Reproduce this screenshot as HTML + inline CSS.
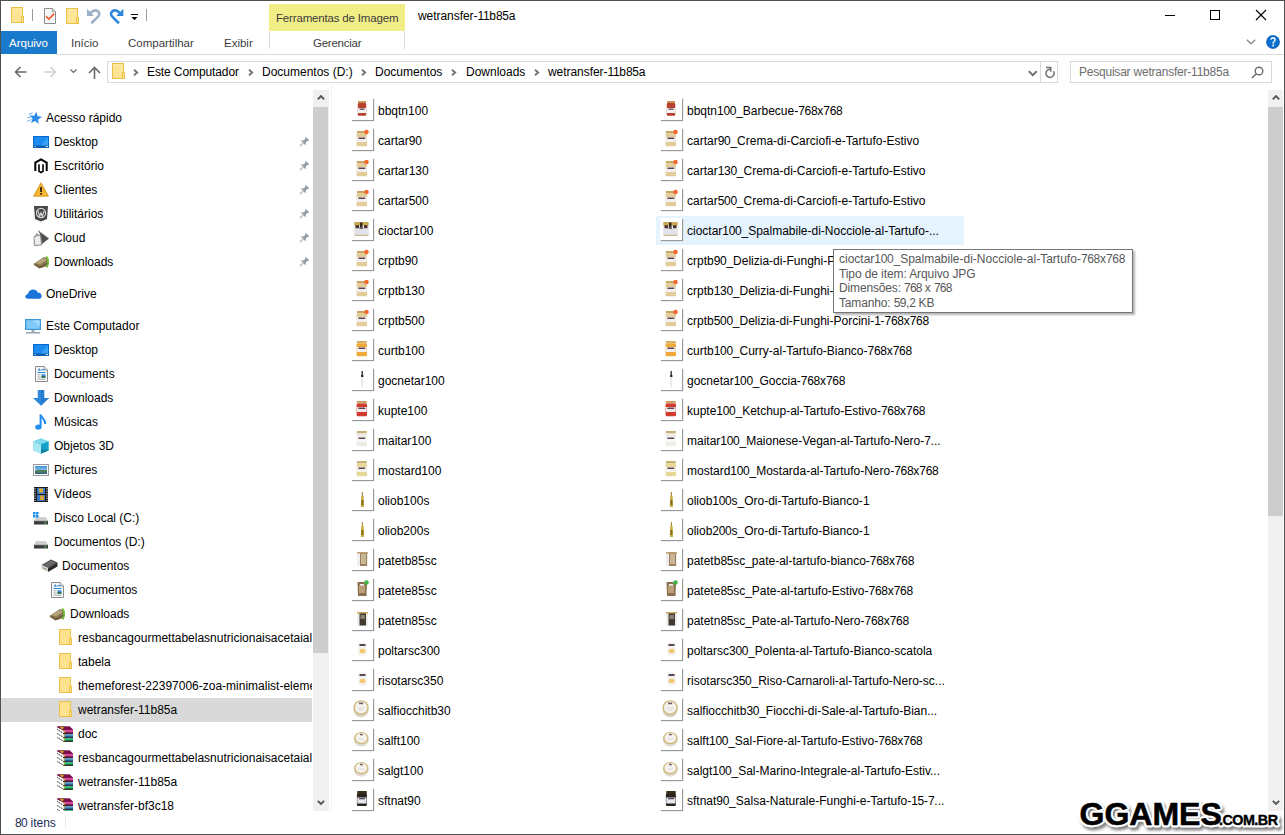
<!DOCTYPE html><html><head><meta charset="utf-8"><style>
*{margin:0;padding:0;box-sizing:border-box}
html,body{width:1285px;height:835px;overflow:hidden;background:#fff}
body{position:relative;font-family:"Liberation Sans",sans-serif;font-size:12px;color:#000}
.t{position:absolute;white-space:nowrap;line-height:16px}
.a{position:absolute}
svg{position:absolute;overflow:visible}
</style></head><body>
<svg style="left:11px;top:7px" width="13" height="16" viewBox="0 0 13 16"><rect x="0.5" y="0.5" width="11" height="15" fill="#FEE595" stroke="#E9C048"/><path d="M2 2L10 2L10 9" stroke="#FFEDB5" stroke-width="1" fill="none"/><rect x="10.5" y="9.5" width="2" height="6" fill="#FEE595" stroke="#E9C048"/></svg><div class="a" style="left:32px;top:9px;width:1px;height:12px;background:#9a9a9a"></div><svg style="left:44px;top:8px" width="13" height="16" viewBox="0 0 13 16"><path d="M0.5 0.5H8.3L11.5 3.7V15.5H0.5Z" fill="#fff" stroke="#8a8a8a"/><path d="M2 2H8V4.5H10V14H2Z" fill="#f2f4f6"/><path d="M8.3 0.5V3.7H11.5" fill="none" stroke="#8a8a8a" stroke-width="0.8"/><path d="M2 8.2L4.8 11L10.3 5.6" fill="none" stroke="#F05A28" stroke-width="1.6"/></svg><svg style="left:66px;top:8px" width="13" height="16" viewBox="0 0 13 16"><rect x="0.5" y="0.5" width="11" height="15" fill="#FEE595" stroke="#E9C048"/><path d="M2 2L10 2L10 9" stroke="#FFEDB5" stroke-width="1" fill="none"/><rect x="10.5" y="9.5" width="2" height="6" fill="#FEE595" stroke="#E9C048"/></svg><svg style="left:87px;top:8px" width="14" height="16" viewBox="0 0 14 16"><path d="M3.5 4.8C5.5 2.8 7 2.2 9 2.4C11.3 2.7 12.6 4.6 12.2 6.8C12 8 11.2 9 4.3 15.2" fill="none" stroke="#9DAFC9" stroke-width="2.6"/><path d="M0 0.8V8H7Z" fill="#9DAFC9"/></svg><svg style="left:110px;top:8px" width="14" height="16" viewBox="0 0 14 16"><g transform="translate(13.3 0) scale(-1 1)"><path d="M3.5 4.8C5.5 2.8 7 2.2 9 2.4C11.3 2.7 12.6 4.6 12.2 6.8C12 8 11.2 9 4.3 15.2" fill="none" stroke="#2B86DC" stroke-width="2.6"/><path d="M0 0.8V8H7Z" fill="#2B86DC"/></g></svg><div class="a" style="left:131px;top:14px;width:7px;height:1px;background:#000"></div><svg style="left:131px;top:17px" width="8" height="5"><path d="M0.5 0H6.5L3.5 3.2Z" fill="#000"/></svg><div class="a" style="left:146px;top:9px;width:1px;height:12px;background:#9a9a9a"></div><div class="a" style="left:269px;top:4px;width:136px;height:27px;background:#F1EE86"></div><div class="t" style="left:276px;top:10px;color:#3c3c3c;font-size:11.5px;letter-spacing:-0.17px">Ferramentas de Imagem</div><div class="a" style="left:269px;top:31px;width:1px;height:18px;background:#dcdcdc"></div><div class="a" style="left:404px;top:31px;width:1px;height:18px;background:#dcdcdc"></div><div class="t" style="left:418px;top:8px;color:#000;font-size:12px;letter-spacing:-0.05px">wetransfer-<span style="letter-spacing:-0.3px">11</span>b<span style="letter-spacing:-0.3px">85</span>a</div><div class="a" style="left:1165px;top:15px;width:10px;height:1px;background:#000"></div><div class="a" style="left:1210px;top:10px;width:10px;height:10px;border:1px solid #000"></div><svg style="left:1256px;top:10px" width="10" height="10" viewBox="0 0 10 10"><path d="M0 0L10 10M10 0L0 10" stroke="#000" stroke-width="1.1"/></svg><div class="a" style="left:1px;top:31px;width:56px;height:23px;background:#1979CA"></div><div class="t" style="left:9px;top:35px;color:#fff;font-size:11.5px;">Arquivo</div><div class="t" style="left:71px;top:35px;color:#3c3c3c;font-size:11.5px;">Início</div><div class="t" style="left:128px;top:35px;color:#3c3c3c;font-size:11.5px;">Compartilhar</div><div class="t" style="left:224px;top:35px;color:#3c3c3c;font-size:11.5px;">Exibir</div><div class="t" style="left:313px;top:35px;color:#3c3c3c;font-size:11.5px;letter-spacing:-0.25px">Gerenciar</div><div class="a" style="left:57px;top:54px;width:1227px;height:1px;background:#DADBDC"></div><svg style="left:1246px;top:39px" width="11" height="7" viewBox="0 0 11 7"><path d="M0.8 0.8L5 4.8L9.2 0.8" fill="none" stroke="#8a8a8a" stroke-width="1.3"/></svg><svg style="left:1266px;top:35px" width="14" height="14" viewBox="0 0 14 14"><circle cx="7" cy="7" r="6.7" fill="#0C6FD0"/><circle cx="7" cy="7" r="6.2" fill="none" stroke="#0a5cb0" stroke-width="0.8"/><path d="M5 4.6C5.2 3.5 6 2.9 7.1 2.9C8.3 2.9 9.1 3.7 9.1 4.7C9.1 6.2 7.4 6.4 7.2 8.2V8.8" fill="none" stroke="#e6f2ff" stroke-width="1.6"/><rect x="6.3" y="9.6" width="1.8" height="1.8" fill="#e6f2ff"/></svg><svg style="left:14px;top:66px" width="13" height="12" viewBox="0 0 13 12"><path d="M12.5 6H1.5M6.5 1L1.5 6L6.5 11" fill="none" stroke="#6a6a6a" stroke-width="1.6"/></svg><svg style="left:44px;top:66px" width="13" height="12" viewBox="0 0 13 12"><path d="M0.5 6H11.5M6.5 1L11.5 6L6.5 11" fill="none" stroke="#d0d0d0" stroke-width="1.6"/></svg><svg style="left:70px;top:69px" width="8" height="5" viewBox="0 0 8 5"><path d="M0.5 0.5L3.5 3.5L6.5 0.5" fill="none" stroke="#6a6a6a" stroke-width="1.2"/></svg><svg style="left:88px;top:66px" width="13" height="13" viewBox="0 0 13 13"><path d="M6.5 13V1.5M1 7L6.5 1.5L12 7" fill="none" stroke="#6a6a6a" stroke-width="1.6"/></svg><div class="a" style="left:107px;top:61px;width:951px;height:22px;border:1px solid #D9D9D9"></div><div class="a" style="left:1040px;top:62px;width:1px;height:20px;background:#D9D9D9"></div><svg style="left:112px;top:63px" width="13" height="16" viewBox="0 0 13 16"><rect x="0.5" y="0.5" width="11" height="15" fill="#FEE595" stroke="#E9C048"/><path d="M2 2L10 2L10 9" stroke="#FFEDB5" stroke-width="1" fill="none"/><rect x="10.5" y="9.5" width="2" height="6" fill="#FEE595" stroke="#E9C048"/></svg><svg style="left:133px;top:69px" width="6" height="8" viewBox="0 0 6 8"><path d="M1 0.8L4.2 3.5L1 6.2" fill="none" stroke="#707070" stroke-width="1.8"/></svg><div class="t" style="left:147px;top:64px;color:#000;font-size:12px;letter-spacing:-0.1px">Este Computador</div><svg style="left:248px;top:69px" width="6" height="8" viewBox="0 0 6 8"><path d="M1 0.8L4.2 3.5L1 6.2" fill="none" stroke="#707070" stroke-width="1.8"/></svg><div class="t" style="left:262px;top:64px;color:#000;font-size:12px;">Documentos (D:)</div><svg style="left:361px;top:69px" width="6" height="8" viewBox="0 0 6 8"><path d="M1 0.8L4.2 3.5L1 6.2" fill="none" stroke="#707070" stroke-width="1.8"/></svg><div class="t" style="left:375px;top:64px;color:#000;font-size:12px;">Documentos</div><svg style="left:451px;top:69px" width="6" height="8" viewBox="0 0 6 8"><path d="M1 0.8L4.2 3.5L1 6.2" fill="none" stroke="#707070" stroke-width="1.8"/></svg><div class="t" style="left:466px;top:64px;color:#000;font-size:12px;">Downloads</div><svg style="left:534px;top:69px" width="6" height="8" viewBox="0 0 6 8"><path d="M1 0.8L4.2 3.5L1 6.2" fill="none" stroke="#707070" stroke-width="1.8"/></svg><div class="t" style="left:548px;top:64px;color:#000;font-size:12px;letter-spacing:-0.05px">wetransfer-<span style="letter-spacing:-0.3px">11</span>b<span style="letter-spacing:-0.3px">85</span>a</div><svg style="left:1028px;top:70px" width="10" height="7" viewBox="0 0 10 7"><path d="M0.8 1.2L4.8 5.2L8.8 1.2" fill="none" stroke="#6a6a6a" stroke-width="1.9"/></svg><svg style="left:1044px;top:66px" width="12" height="14" viewBox="0 0 12 14"><path d="M6 3.2A4.1 4.1 0 1 0 9.5 5.1" fill="none" stroke="#707070" stroke-width="1.5"/><path d="M2 1.5H6.7V5.8" fill="none" stroke="#707070" stroke-width="1.5"/></svg><div class="a" style="left:1070px;top:61px;width:202px;height:22px;border:1px solid #D9D9D9"></div><div class="t" style="left:1079px;top:64px;color:#6d6d6d;font-size:12px;letter-spacing:-0.22px">Pesquisar wetransfer-11b85a</div><svg style="left:1251px;top:66px" width="13" height="13" viewBox="0 0 13 13"><circle cx="8" cy="5" r="3.8" fill="none" stroke="#6d6d6d" stroke-width="1.4"/><path d="M5.3 7.7L1 12" stroke="#6d6d6d" stroke-width="1.6"/></svg><div class="a" style="left:0;top:0;width:312px;height:811px;overflow:hidden"><svg style="left:26px;top:111px" width="16" height="14" viewBox="0 0 16 14"><path d="M10.42 0.66 L11.51 5.11 L16.00 6.05 L12.11 8.47 L12.60 13.03 L9.10 10.07 L4.92 11.95 L6.64 7.70 L3.57 4.31 L8.14 4.64Z" fill="#2C8BE6"/><path d="M2.5 3.2L6.5 2M1.2 6.8L5.2 5.8M1 10.2L5.5 8.6" stroke="#6fb1ee" stroke-width="1"/></svg><div class="t" style="left:46px;top:110px;color:#000;font-size:12px;">Acesso rápido</div><svg style="left:33px;top:136px" width="16" height="12" viewBox="0 0 16 12"><rect x="0" y="0" width="16" height="12" fill="#1C8CF0"/><path d="M6 11L15.5 1.5V11Z" fill="#3aa4f8"/><rect x="0.5" y="0.5" width="15" height="11" fill="none" stroke="#0a6ac8" stroke-width="1"/><rect x="0.5" y="9.5" width="15" height="2" fill="#0a5aa8"/><rect x="1.5" y="10" width="1" height="1" fill="#fff"/><rect x="12.5" y="10" width="1" height="1" fill="#fff"/><rect x="14" y="10" width="1" height="1" fill="#fff"/></svg><div class="t" style="left:54px;top:134px;color:#000;font-size:12px;">Desktop</div><svg style="left:298px;top:136px" width="12" height="12" viewBox="0 0 12 12"><g transform="translate(6.2 6) rotate(45) translate(0 -4.75)" fill="#8E9AA4"><rect x="-2.3" y="0" width="4.6" height="1.5"/><rect x="-1.4" y="1.2" width="2.8" height="3.4"/><path d="M-1.4 4.2L-3.7 6H3.7L1.4 4.2Z"/><rect x="-0.45" y="5.8" width="0.9" height="4.8"/></g></svg><svg style="left:34px;top:158px" width="14" height="16" viewBox="0 0 14 16"><path d="M1.3 13V4.6L7 1.3L12.7 4.6V13" fill="none" stroke="#000" stroke-width="2"/><path d="M5 6.2V13.3L7 14.5L9 13.3V6.2" fill="none" stroke="#000" stroke-width="1.6"/></svg><div class="t" style="left:54px;top:158px;color:#000;font-size:12px;">Escritório</div><svg style="left:298px;top:160px" width="12" height="12" viewBox="0 0 12 12"><g transform="translate(6.2 6) rotate(45) translate(0 -4.75)" fill="#8E9AA4"><rect x="-2.3" y="0" width="4.6" height="1.5"/><rect x="-1.4" y="1.2" width="2.8" height="3.4"/><path d="M-1.4 4.2L-3.7 6H3.7L1.4 4.2Z"/><rect x="-0.45" y="5.8" width="0.9" height="4.8"/></g></svg><svg style="left:33px;top:182px" width="16" height="15" viewBox="0 0 16 15"><path d="M8 0.8L15.4 14.2H0.6Z" fill="#F7B731" stroke="#C98A10" stroke-width="0.8"/><rect x="7.2" y="5" width="1.6" height="5" fill="#111"/><rect x="7.2" y="11" width="1.6" height="1.6" fill="#111"/></svg><div class="t" style="left:54px;top:182px;color:#000;font-size:12px;">Clientes</div><svg style="left:298px;top:184px" width="12" height="12" viewBox="0 0 12 12"><g transform="translate(6.2 6) rotate(45) translate(0 -4.75)" fill="#8E9AA4"><rect x="-2.3" y="0" width="4.6" height="1.5"/><rect x="-1.4" y="1.2" width="2.8" height="3.4"/><path d="M-1.4 4.2L-3.7 6H3.7L1.4 4.2Z"/><rect x="-0.45" y="5.8" width="0.9" height="4.8"/></g></svg><svg style="left:34px;top:206px" width="14" height="16" viewBox="0 0 14 16"><path d="M0 0H14L13 13L7 15.5L1 13Z" fill="#464646"/><circle cx="7" cy="7" r="4.6" fill="none" stroke="#d8d8d8" stroke-width="1.1"/><path d="M3.8 4.8L5.7 10.3L7 6.8L8.3 10.3L10.2 4.8" fill="none" stroke="#d8d8d8" stroke-width="1.1"/></svg><div class="t" style="left:54px;top:206px;color:#000;font-size:12px;">Utilitários</div><svg style="left:298px;top:208px" width="12" height="12" viewBox="0 0 12 12"><g transform="translate(6.2 6) rotate(45) translate(0 -4.75)" fill="#8E9AA4"><rect x="-2.3" y="0" width="4.6" height="1.5"/><rect x="-1.4" y="1.2" width="2.8" height="3.4"/><path d="M-1.4 4.2L-3.7 6H3.7L1.4 4.2Z"/><rect x="-0.45" y="5.8" width="0.9" height="4.8"/></g></svg><svg style="left:33px;top:230px" width="17" height="16" viewBox="0 0 17 16"><path d="M1 6.5L7.5 5L8.5 15L1.5 15.5Z" fill="#ececec" stroke="#808080" stroke-width="0.9"/><path d="M2.5 6L4 3.5L6 5.5" fill="none" stroke="#666" stroke-width="0.9"/><path d="M5 0.5L16 8.5L9 14L7.8 5.5Z" fill="#505050"/><path d="M5 0.5L14.5 7.5" stroke="#9a9a9a" stroke-width="1"/></svg><div class="t" style="left:54px;top:230px;color:#000;font-size:12px;">Cloud</div><svg style="left:298px;top:232px" width="12" height="12" viewBox="0 0 12 12"><g transform="translate(6.2 6) rotate(45) translate(0 -4.75)" fill="#8E9AA4"><rect x="-2.3" y="0" width="4.6" height="1.5"/><rect x="-1.4" y="1.2" width="2.8" height="3.4"/><path d="M-1.4 4.2L-3.7 6H3.7L1.4 4.2Z"/><rect x="-0.45" y="5.8" width="0.9" height="4.8"/></g></svg><svg style="left:33px;top:255px" width="17" height="14" viewBox="0 0 17 14"><path d="M0.5 9L11 2L15.5 4L15 11L6 13.5Z" fill="#8a7550"/><path d="M2.5 8L10.5 3L14 5L7 9.5Z" fill="#b5a27a"/><path d="M1 9.5L7 12.5L14.5 8" fill="none" stroke="#5a4a30" stroke-width="1"/><path d="M13 1.5C15.5 3 16 8 14 12.5" fill="none" stroke="#6cc22a" stroke-width="1.6"/></svg><div class="t" style="left:54px;top:254px;color:#000;font-size:12px;">Downloads</div><svg style="left:298px;top:256px" width="12" height="12" viewBox="0 0 12 12"><g transform="translate(6.2 6) rotate(45) translate(0 -4.75)" fill="#8E9AA4"><rect x="-2.3" y="0" width="4.6" height="1.5"/><rect x="-1.4" y="1.2" width="2.8" height="3.4"/><path d="M-1.4 4.2L-3.7 6H3.7L1.4 4.2Z"/><rect x="-0.45" y="5.8" width="0.9" height="4.8"/></g></svg><svg style="left:25px;top:289px" width="17" height="10" viewBox="0 0 17 10"><path d="M2.8 9.8C1.2 9.8 0.3 8.7 0.3 7.5C0.3 6.2 1.3 5.2 2.7 5.2C3.2 2.5 5.4 0.4 8.2 0.4C10.3 0.4 12 1.6 12.8 3.4C15 3.3 16.7 5 16.7 6.9C16.7 8.5 15.5 9.8 13.8 9.8Z" fill="#1B74D8"/></svg><div class="t" style="left:46px;top:286px;color:#000;font-size:12px;">OneDrive</div><svg style="left:25px;top:319px" width="16" height="15" viewBox="0 0 16 15"><rect x="0.5" y="0.5" width="15" height="10" fill="#5ab8f5" stroke="#3a98d8"/><path d="M1.5 1.5H14.5V9.5H1.5Z" fill="#7fcaf8"/><path d="M8 1.5L14.5 1.5V7Z" fill="#a8dcfb"/><rect x="6.5" y="11" width="3" height="2" fill="#9aaab8"/><rect x="1" y="13" width="14" height="1.6" fill="#9aaab8"/></svg><div class="t" style="left:46px;top:318px;color:#000;font-size:12px;">Este Computador</div><svg style="left:33px;top:344px" width="16" height="12" viewBox="0 0 16 12"><rect x="0" y="0" width="16" height="12" fill="#1C8CF0"/><path d="M6 11L15.5 1.5V11Z" fill="#3aa4f8"/><rect x="0.5" y="0.5" width="15" height="11" fill="none" stroke="#0a6ac8" stroke-width="1"/><rect x="0.5" y="9.5" width="15" height="2" fill="#0a5aa8"/><rect x="1.5" y="10" width="1" height="1" fill="#fff"/><rect x="12.5" y="10" width="1" height="1" fill="#fff"/><rect x="14" y="10" width="1" height="1" fill="#fff"/></svg><div class="t" style="left:54px;top:342px;color:#000;font-size:12px;">Desktop</div><svg style="left:35px;top:366px" width="13" height="16" viewBox="0 0 13 16"><path d="M0.5 0.5H9L12.5 4V15.5H0.5Z" fill="#fcfcfc" stroke="#8a8a8a" stroke-width="1"/><path d="M9 0.5V4H12.5" fill="none" stroke="#8a8a8a" stroke-width="0.8"/><path d="M3 5L4.2 2.5L5.4 5M3.5 4H5" fill="none" stroke="#2a7fd4" stroke-width="0.8"/><path d="M6 3.8H10M2.5 6.5H10.5" stroke="#2a7fd4" stroke-width="1"/><path d="M2.5 8.8H5.5M2.5 11H5.5M2.5 13.2H10.5" stroke="#9a9a9a" stroke-width="0.9"/><rect x="6.5" y="8.2" width="4" height="3.5" fill="#3a8ad8"/><rect x="6.5" y="10.2" width="4" height="1.5" fill="#2a6a3a"/></svg><div class="t" style="left:54px;top:366px;color:#000;font-size:12px;">Documents</div><svg style="left:33px;top:390px" width="16" height="16" viewBox="0 0 16 16"><path d="M4.8 0H11.2V8H16L8 15.8L0 8H4.8Z" fill="#2F88DD"/><path d="M8 0H11.2V8H16L8 15.8Z" fill="#1E74C8" opacity="0.5"/></svg><div class="t" style="left:54px;top:390px;color:#000;font-size:12px;">Downloads</div><svg style="left:35px;top:414px" width="12" height="16" viewBox="0 0 12 16"><path d="M5.6 0.5V12.5" stroke="#1E8CF0" stroke-width="2"/><ellipse cx="3.4" cy="13" rx="3.2" ry="2.6" fill="#1E8CF0"/><path d="M5.6 1C6.5 4 10.5 5 10.2 10" fill="none" stroke="#1E8CF0" stroke-width="2"/></svg><div class="t" style="left:54px;top:414px;color:#000;font-size:12px;">Músicas</div><svg style="left:33px;top:438px" width="16" height="16" viewBox="0 0 16 16"><path d="M8 0.5L15.5 3.5V12.5L8 15.5L0.5 12.5V3.5Z" fill="#2bb8d8"/><path d="M0.5 3.5L8 6.5V15.5L0.5 12.5Z" fill="#a8e8f4"/><path d="M0.5 3.5L8 6.5L15.5 3.5L8 0.5Z" fill="#7fd8ec"/><path d="M8 6.5V15.5L15.5 12.5V3.5Z" fill="#15a0c4"/><path d="M8 11L15.5 12.5L8 15.5Z" fill="#0a6a88" opacity="0.6"/></svg><div class="t" style="left:54px;top:438px;color:#000;font-size:12px;">Objetos 3D</div><svg style="left:33px;top:464px" width="16" height="12" viewBox="0 0 16 12"><defs><linearGradient id="sky" x1="0" y1="0" x2="0" y2="1"><stop offset="0" stop-color="#3d8fd8"/><stop offset="1" stop-color="#d8ecf8"/></linearGradient></defs><rect x="0.5" y="0.5" width="15" height="11" fill="#fff" stroke="#9a9a9a"/><rect x="2" y="2" width="12" height="8" fill="url(#sky)"/><path d="M2 7C5 4.5 9 6.5 14 6V10H2Z" fill="#4f7f5a"/><path d="M2 9C6 8 10 9.5 14 8.5V10H2Z" fill="#2f5f8a"/></svg><div class="t" style="left:54px;top:462px;color:#000;font-size:12px;">Pictures</div><svg style="left:34px;top:487px" width="14" height="15" viewBox="0 0 14 15"><rect x="0" y="0" width="14" height="15" fill="#1b1b1b"/><rect x="3" y="1" width="8" height="6" fill="#3a78c8"/><rect x="5" y="1.5" width="4" height="4" fill="#e0b030"/><rect x="3" y="8" width="8" height="6" fill="#3a78c8"/><rect x="6" y="8.5" width="4" height="4.5" fill="#d8a030"/><path d="M1 1.2V14M13 1.2V14" stroke="#fff" stroke-width="1" stroke-dasharray="1.2 1.2"/></svg><div class="t" style="left:54px;top:486px;color:#000;font-size:12px;">Vídeos</div><svg style="left:33px;top:512px" width="16" height="14" viewBox="0 0 16 14"><path d="M3 5H13L15 9H1Z" fill="#cfcfcf"/><path d="M1 9H15V12.5H1Z" fill="#3a3a3a"/><path d="M1 9H15" stroke="#8a8a8a" stroke-width="0.6"/><rect x="11.5" y="10.2" width="1.8" height="1.2" fill="#4fe04f"/><rect x="0" y="0" width="2.5" height="2.5" fill="#1E90F0"/><rect x="3" y="0" width="2.5" height="2.5" fill="#1E90F0"/><rect x="0" y="3" width="2.5" height="2.5" fill="#1E90F0"/><rect x="3" y="3" width="2.5" height="2.5" fill="#1E90F0"/></svg><div class="t" style="left:54px;top:510px;color:#000;font-size:12px;">Disco Local (C:)</div><svg style="left:33px;top:536px" width="16" height="14" viewBox="0 0 16 14"><path d="M3 5H13L15 9H1Z" fill="#cfcfcf"/><path d="M1 9H15V12.5H1Z" fill="#3a3a3a"/><path d="M1 9H15" stroke="#8a8a8a" stroke-width="0.6"/><rect x="11.5" y="10.2" width="1.8" height="1.2" fill="#4fe04f"/></svg><div class="t" style="left:54px;top:534px;color:#000;font-size:12px;">Documentos (D:)</div><svg style="left:41px;top:558px" width="17" height="15" viewBox="0 0 17 15"><path d="M0.5 7L10 1.5L16.5 4.5L7 10Z" fill="#4a4a4a"/><path d="M2 7L10 2.5L14.5 4.6L7 9Z" fill="#6a6a6a"/><path d="M0.5 7L7 10V14L0.5 11Z" fill="#d8d8d0"/><path d="M7 10L16.5 4.5V8.5L7 14Z" fill="#2a2a2a"/><path d="M1.5 9.5L6 11.8" stroke="#7a7a70" stroke-width="0.8"/></svg><div class="t" style="left:62px;top:558px;color:#000;font-size:12px;">Documentos</div><svg style="left:51px;top:582px" width="13" height="16" viewBox="0 0 13 16"><path d="M0.5 0.5H9L12.5 4V15.5H0.5Z" fill="#fcfcfc" stroke="#8a8a8a" stroke-width="1"/><path d="M9 0.5V4H12.5" fill="none" stroke="#8a8a8a" stroke-width="0.8"/><path d="M3 5L4.2 2.5L5.4 5M3.5 4H5" fill="none" stroke="#2a7fd4" stroke-width="0.8"/><path d="M6 3.8H10M2.5 6.5H10.5" stroke="#2a7fd4" stroke-width="1"/><path d="M2.5 8.8H5.5M2.5 11H5.5M2.5 13.2H10.5" stroke="#9a9a9a" stroke-width="0.9"/><rect x="6.5" y="8.2" width="4" height="3.5" fill="#3a8ad8"/><rect x="6.5" y="10.2" width="4" height="1.5" fill="#2a6a3a"/></svg><div class="t" style="left:70px;top:582px;color:#000;font-size:12px;">Documentos</div><svg style="left:49px;top:607px" width="17" height="14" viewBox="0 0 17 14"><path d="M0.5 9L11 2L15.5 4L15 11L6 13.5Z" fill="#8a7550"/><path d="M2.5 8L10.5 3L14 5L7 9.5Z" fill="#b5a27a"/><path d="M1 9.5L7 12.5L14.5 8" fill="none" stroke="#5a4a30" stroke-width="1"/><path d="M13 1.5C15.5 3 16 8 14 12.5" fill="none" stroke="#6cc22a" stroke-width="1.6"/></svg><div class="t" style="left:70px;top:606px;color:#000;font-size:12px;">Downloads</div><div class="a" style="left:1px;top:698px;width:311px;height:24px;background:#D9D9D9"></div><svg style="left:59px;top:629px" width="13" height="16" viewBox="0 0 13 16"><rect x="0.5" y="0.5" width="11" height="15" fill="#FFE28F" stroke="#E8C04A"/><rect x="10.5" y="9.5" width="2" height="6" fill="#FFE28F" stroke="#E8C04A"/></svg><div class="t" style="left:78px;top:630px;color:#000;font-size:12px;">resbancagourmettabelasnutricionaisacetaialeberdadecomedeusdogmd</div><svg style="left:59px;top:653px" width="13" height="16" viewBox="0 0 13 16"><rect x="0.5" y="0.5" width="11" height="15" fill="#FFE28F" stroke="#E8C04A"/><rect x="10.5" y="9.5" width="2" height="6" fill="#FFE28F" stroke="#E8C04A"/></svg><div class="t" style="left:78px;top:654px;color:#000;font-size:12px;">tabela</div><svg style="left:59px;top:677px" width="13" height="16" viewBox="0 0 13 16"><rect x="0.5" y="0.5" width="11" height="15" fill="#FFE28F" stroke="#E8C04A"/><rect x="10.5" y="9.5" width="2" height="6" fill="#FFE28F" stroke="#E8C04A"/></svg><div class="t" style="left:78px;top:678px;color:#000;font-size:12px;">themeforest-22397006-zoa-minimalist-elementor-wordpress-theme</div><svg style="left:59px;top:701px" width="13" height="16" viewBox="0 0 13 16"><rect x="0.5" y="0.5" width="11" height="15" fill="#FFE28F" stroke="#E8C04A"/><rect x="10.5" y="9.5" width="2" height="6" fill="#FFE28F" stroke="#E8C04A"/></svg><div class="t" style="left:78px;top:702px;color:#000;font-size:12px;">wetransfer-11b85a</div><svg style="left:57px;top:726px" width="17" height="16" viewBox="0 0 17 16"><defs><linearGradient id="wp" x1="0" y1="0" x2="0" y2="1"><stop offset="0" stop-color="#ff70d0"/><stop offset="1" stop-color="#7a0040"/></linearGradient><linearGradient id="wb" x1="0" y1="0" x2="0" y2="1"><stop offset="0" stop-color="#80d0ff"/><stop offset="1" stop-color="#0a3a8a"/></linearGradient><linearGradient id="wg" x1="0" y1="0" x2="0" y2="1"><stop offset="0" stop-color="#40ffb0"/><stop offset="1" stop-color="#0a5a20"/></linearGradient></defs><path d="M0 0.3H12.6L16 3.6V7.2H6.5L0 1.3Z" fill="#7d0f4a"/><ellipse cx="5" cy="1.8" rx="1.8" ry="0.9" fill="#d4d000"/><rect x="6.8" y="4.3" width="9.2" height="2.9" fill="url(#wp)"/><rect x="6.8" y="8.2" width="9.2" height="3" fill="url(#wb)"/><rect x="6.8" y="12.2" width="9.2" height="3" fill="url(#wg)"/><path d="M6 7.2H16V8.2H6ZM6 11.2H16V12.2H6ZM6 15.2H16V16H6Z" fill="#000"/><path d="M0 1.5L6.8 4.8V7.5L0 3.6Z M0 5.3L6.8 8.4V11.4L0 7.8Z M0 9.3L6.8 12.4V15.4L0 11.8Z" fill="#fff"/><path d="M0.3 3.5L6.5 7.4M0.3 7.6L6.5 11.3M0.3 11.6L6.5 15.3" stroke="#000" stroke-width="1" stroke-dasharray="1.3 1"/><path d="M7.2 4.5V7M7.2 8.4V11M7.2 12.4V15" stroke="#d8c800" stroke-width="0.9"/></svg><div class="t" style="left:78px;top:726px;color:#000;font-size:12px;">doc</div><svg style="left:57px;top:750px" width="17" height="16" viewBox="0 0 17 16"><defs><linearGradient id="wp" x1="0" y1="0" x2="0" y2="1"><stop offset="0" stop-color="#ff70d0"/><stop offset="1" stop-color="#7a0040"/></linearGradient><linearGradient id="wb" x1="0" y1="0" x2="0" y2="1"><stop offset="0" stop-color="#80d0ff"/><stop offset="1" stop-color="#0a3a8a"/></linearGradient><linearGradient id="wg" x1="0" y1="0" x2="0" y2="1"><stop offset="0" stop-color="#40ffb0"/><stop offset="1" stop-color="#0a5a20"/></linearGradient></defs><path d="M0 0.3H12.6L16 3.6V7.2H6.5L0 1.3Z" fill="#7d0f4a"/><ellipse cx="5" cy="1.8" rx="1.8" ry="0.9" fill="#d4d000"/><rect x="6.8" y="4.3" width="9.2" height="2.9" fill="url(#wp)"/><rect x="6.8" y="8.2" width="9.2" height="3" fill="url(#wb)"/><rect x="6.8" y="12.2" width="9.2" height="3" fill="url(#wg)"/><path d="M6 7.2H16V8.2H6ZM6 11.2H16V12.2H6ZM6 15.2H16V16H6Z" fill="#000"/><path d="M0 1.5L6.8 4.8V7.5L0 3.6Z M0 5.3L6.8 8.4V11.4L0 7.8Z M0 9.3L6.8 12.4V15.4L0 11.8Z" fill="#fff"/><path d="M0.3 3.5L6.5 7.4M0.3 7.6L6.5 11.3M0.3 11.6L6.5 15.3" stroke="#000" stroke-width="1" stroke-dasharray="1.3 1"/><path d="M7.2 4.5V7M7.2 8.4V11M7.2 12.4V15" stroke="#d8c800" stroke-width="0.9"/></svg><div class="t" style="left:78px;top:750px;color:#000;font-size:12px;">resbancagourmettabelasnutricionaisacetaialeberdadecomedeusdogmd</div><svg style="left:57px;top:774px" width="17" height="16" viewBox="0 0 17 16"><defs><linearGradient id="wp" x1="0" y1="0" x2="0" y2="1"><stop offset="0" stop-color="#ff70d0"/><stop offset="1" stop-color="#7a0040"/></linearGradient><linearGradient id="wb" x1="0" y1="0" x2="0" y2="1"><stop offset="0" stop-color="#80d0ff"/><stop offset="1" stop-color="#0a3a8a"/></linearGradient><linearGradient id="wg" x1="0" y1="0" x2="0" y2="1"><stop offset="0" stop-color="#40ffb0"/><stop offset="1" stop-color="#0a5a20"/></linearGradient></defs><path d="M0 0.3H12.6L16 3.6V7.2H6.5L0 1.3Z" fill="#7d0f4a"/><ellipse cx="5" cy="1.8" rx="1.8" ry="0.9" fill="#d4d000"/><rect x="6.8" y="4.3" width="9.2" height="2.9" fill="url(#wp)"/><rect x="6.8" y="8.2" width="9.2" height="3" fill="url(#wb)"/><rect x="6.8" y="12.2" width="9.2" height="3" fill="url(#wg)"/><path d="M6 7.2H16V8.2H6ZM6 11.2H16V12.2H6ZM6 15.2H16V16H6Z" fill="#000"/><path d="M0 1.5L6.8 4.8V7.5L0 3.6Z M0 5.3L6.8 8.4V11.4L0 7.8Z M0 9.3L6.8 12.4V15.4L0 11.8Z" fill="#fff"/><path d="M0.3 3.5L6.5 7.4M0.3 7.6L6.5 11.3M0.3 11.6L6.5 15.3" stroke="#000" stroke-width="1" stroke-dasharray="1.3 1"/><path d="M7.2 4.5V7M7.2 8.4V11M7.2 12.4V15" stroke="#d8c800" stroke-width="0.9"/></svg><div class="t" style="left:78px;top:774px;color:#000;font-size:12px;">wetransfer-11b85a</div><svg style="left:57px;top:798px" width="17" height="16" viewBox="0 0 17 16"><defs><linearGradient id="wp" x1="0" y1="0" x2="0" y2="1"><stop offset="0" stop-color="#ff70d0"/><stop offset="1" stop-color="#7a0040"/></linearGradient><linearGradient id="wb" x1="0" y1="0" x2="0" y2="1"><stop offset="0" stop-color="#80d0ff"/><stop offset="1" stop-color="#0a3a8a"/></linearGradient><linearGradient id="wg" x1="0" y1="0" x2="0" y2="1"><stop offset="0" stop-color="#40ffb0"/><stop offset="1" stop-color="#0a5a20"/></linearGradient></defs><path d="M0 0.3H12.6L16 3.6V7.2H6.5L0 1.3Z" fill="#7d0f4a"/><ellipse cx="5" cy="1.8" rx="1.8" ry="0.9" fill="#d4d000"/><rect x="6.8" y="4.3" width="9.2" height="2.9" fill="url(#wp)"/><rect x="6.8" y="8.2" width="9.2" height="3" fill="url(#wb)"/><rect x="6.8" y="12.2" width="9.2" height="3" fill="url(#wg)"/><path d="M6 7.2H16V8.2H6ZM6 11.2H16V12.2H6ZM6 15.2H16V16H6Z" fill="#000"/><path d="M0 1.5L6.8 4.8V7.5L0 3.6Z M0 5.3L6.8 8.4V11.4L0 7.8Z M0 9.3L6.8 12.4V15.4L0 11.8Z" fill="#fff"/><path d="M0.3 3.5L6.5 7.4M0.3 7.6L6.5 11.3M0.3 11.6L6.5 15.3" stroke="#000" stroke-width="1" stroke-dasharray="1.3 1"/><path d="M7.2 4.5V7M7.2 8.4V11M7.2 12.4V15" stroke="#d8c800" stroke-width="0.9"/></svg><div class="t" style="left:78px;top:798px;color:#000;font-size:12px;">wetransfer-bf3c18</div></div><div class="a" style="left:313px;top:90px;width:16px;height:721px;background:#F0F0F0"></div><div class="a" style="left:313px;top:107px;width:15px;height:546px;background:#CDCDCD"></div><svg style="left:317px;top:95px" width="8" height="5" viewBox="0 0 8 5"><path d="M0.8 4.4L4 1.2L7.2 4.4" fill="none" stroke="#555" stroke-width="1.9"/></svg><svg style="left:317px;top:800px" width="8" height="5" viewBox="0 0 8 5"><path d="M0.8 0.8L4 4L7.2 0.8" fill="none" stroke="#555" stroke-width="1.9"/></svg><div class="a" style="left:331px;top:85px;width:1px;height:726px;background:#F2F2F2"></div><div class="a" style="left:1268px;top:90px;width:15px;height:721px;background:#F0F0F0"></div><div class="a" style="left:1268px;top:107px;width:15px;height:409px;background:#CDCDCD"></div><svg style="left:1272px;top:95px" width="8" height="5" viewBox="0 0 8 5"><path d="M0.8 4.4L4 1.2L7.2 4.4" fill="none" stroke="#555" stroke-width="1.9"/></svg><svg style="left:1272px;top:800px" width="8" height="5" viewBox="0 0 8 5"><path d="M0.8 0.8L4 4L7.2 0.8" fill="none" stroke="#555" stroke-width="1.9"/></svg><div class="t" style="left:15px;top:815px;color:#1b2a55;font-size:12px;"><span style="letter-spacing:-0.6px">80</span> itens</div><div class="a" style="left:65px;top:817px;width:1px;height:11px;background:#e8e8e8"></div><div class="a" style="left:656px;top:216px;width:308px;height:29px;background:#E5F3FF"></div><div class="a" style="left:351px;top:98px;width:22px;height:22px;background:#fff;box-shadow:1px 1px 1px -0.3px #999"></div><svg style="left:352px;top:99px" width="21" height="21" viewBox="0 0 21 21"><rect x="6" y="2" width="8" height="2" fill="#c89858"/><rect x="5.8" y="4" width="8.4" height="12.5" rx="1.2" fill="#b8402e"/><rect x="6" y="9" width="8" height="5" fill="#f2f2f2"/><rect x="7.5" y="9.5" width="5" height="1.3" fill="#5a4050"/><rect x="6" y="14" width="8" height="2.5" fill="#b8402e"/></svg><div class="t" style="left:378px;top:103px;color:#000;font-size:12px;">bbqtn100</div><div class="a" style="left:660px;top:98px;width:22px;height:22px;background:#fff;box-shadow:1px 1px 1px -0.3px #999"></div><svg style="left:661px;top:99px" width="21" height="21" viewBox="0 0 21 21"><rect x="6" y="2" width="8" height="2" fill="#c89858"/><rect x="5.8" y="4" width="8.4" height="12.5" rx="1.2" fill="#b8402e"/><rect x="6" y="9" width="8" height="5" fill="#f2f2f2"/><rect x="7.5" y="9.5" width="5" height="1.3" fill="#5a4050"/><rect x="6" y="14" width="8" height="2.5" fill="#b8402e"/></svg><div class="t" style="left:687px;top:103px;color:#000;font-size:12px;">bbqtn<span style="letter-spacing:-0.3px">100</span>_Barbecue-<span style="letter-spacing:-0.3px">768</span>x<span style="letter-spacing:-0.3px">768</span></div><div class="a" style="left:351px;top:128px;width:22px;height:22px;background:#fff;box-shadow:1px 1px 1px -0.3px #999"></div><svg style="left:352px;top:129px" width="21" height="21" viewBox="0 0 21 21"><rect x="4.9" y="2" width="9.799999999999999" height="2.5" fill="#c9a860"/><rect x="4.6000000000000005" y="4.5" width="10.399999999999999" height="12.7" rx="1.2" fill="#e2cc98"/><rect x="4.9" y="8" width="9.799999999999999" height="5" fill="#f3f0f2"/><rect x="6.4" y="8.5" width="6.799999999999999" height="1.5" fill="#5a4050"/><circle cx="14.5" cy="3" r="2.3" fill="#f26a30"/></svg><div class="t" style="left:378px;top:133px;color:#000;font-size:12px;">cartar90</div><div class="a" style="left:660px;top:128px;width:22px;height:22px;background:#fff;box-shadow:1px 1px 1px -0.3px #999"></div><svg style="left:661px;top:129px" width="21" height="21" viewBox="0 0 21 21"><rect x="4.9" y="2" width="9.799999999999999" height="2.5" fill="#c9a860"/><rect x="4.6000000000000005" y="4.5" width="10.399999999999999" height="12.7" rx="1.2" fill="#e2cc98"/><rect x="4.9" y="8" width="9.799999999999999" height="5" fill="#f3f0f2"/><rect x="6.4" y="8.5" width="6.799999999999999" height="1.5" fill="#5a4050"/><circle cx="14.5" cy="3" r="2.3" fill="#f26a30"/></svg><div class="t" style="left:687px;top:133px;color:#000;font-size:12px;">cartar<span style="letter-spacing:-0.3px">90</span>_Crema-di-Carciofi-e-Tartufo-Estivo</div><div class="a" style="left:351px;top:158px;width:22px;height:22px;background:#fff;box-shadow:1px 1px 1px -0.3px #999"></div><svg style="left:352px;top:159px" width="21" height="21" viewBox="0 0 21 21"><rect x="4.9" y="2" width="9.799999999999999" height="2.5" fill="#c9a860"/><rect x="4.6000000000000005" y="4.5" width="10.399999999999999" height="12.7" rx="1.2" fill="#e2cc98"/><rect x="4.9" y="8" width="9.799999999999999" height="5" fill="#f3f0f2"/><rect x="6.4" y="8.5" width="6.799999999999999" height="1.5" fill="#5a4050"/><circle cx="14.5" cy="3" r="2.3" fill="#f26a30"/></svg><div class="t" style="left:378px;top:163px;color:#000;font-size:12px;">cartar130</div><div class="a" style="left:660px;top:158px;width:22px;height:22px;background:#fff;box-shadow:1px 1px 1px -0.3px #999"></div><svg style="left:661px;top:159px" width="21" height="21" viewBox="0 0 21 21"><rect x="4.9" y="2" width="9.799999999999999" height="2.5" fill="#c9a860"/><rect x="4.6000000000000005" y="4.5" width="10.399999999999999" height="12.7" rx="1.2" fill="#e2cc98"/><rect x="4.9" y="8" width="9.799999999999999" height="5" fill="#f3f0f2"/><rect x="6.4" y="8.5" width="6.799999999999999" height="1.5" fill="#5a4050"/><circle cx="14.5" cy="3" r="2.3" fill="#f26a30"/></svg><div class="t" style="left:687px;top:163px;color:#000;font-size:12px;">cartar<span style="letter-spacing:-0.3px">130</span>_Crema-di-Carciofi-e-Tartufo-Estivo</div><div class="a" style="left:351px;top:188px;width:22px;height:22px;background:#fff;box-shadow:1px 1px 1px -0.3px #999"></div><svg style="left:352px;top:189px" width="21" height="21" viewBox="0 0 21 21"><rect x="4.9" y="2" width="9.799999999999999" height="2.5" fill="#c9a860"/><rect x="4.6000000000000005" y="4.5" width="10.399999999999999" height="12.7" rx="1.2" fill="#e2cc98"/><rect x="4.9" y="8" width="9.799999999999999" height="5" fill="#f3f0f2"/><rect x="6.4" y="8.5" width="6.799999999999999" height="1.5" fill="#5a4050"/><circle cx="14.5" cy="3" r="2.3" fill="#f26a30"/></svg><div class="t" style="left:378px;top:193px;color:#000;font-size:12px;">cartar500</div><div class="a" style="left:660px;top:188px;width:22px;height:22px;background:#fff;box-shadow:1px 1px 1px -0.3px #999"></div><svg style="left:661px;top:189px" width="21" height="21" viewBox="0 0 21 21"><rect x="4.9" y="2" width="9.799999999999999" height="2.5" fill="#c9a860"/><rect x="4.6000000000000005" y="4.5" width="10.399999999999999" height="12.7" rx="1.2" fill="#e2cc98"/><rect x="4.9" y="8" width="9.799999999999999" height="5" fill="#f3f0f2"/><rect x="6.4" y="8.5" width="6.799999999999999" height="1.5" fill="#5a4050"/><circle cx="14.5" cy="3" r="2.3" fill="#f26a30"/></svg><div class="t" style="left:687px;top:193px;color:#000;font-size:12px;">cartar<span style="letter-spacing:-0.3px">500</span>_Crema-di-Carciofi-e-Tartufo-Estivo</div><div class="a" style="left:351px;top:218px;width:22px;height:22px;background:#fff;box-shadow:1px 1px 1px -0.3px #999"></div><svg style="left:352px;top:219px" width="21" height="21" viewBox="0 0 21 21"><g transform="translate(-2 0)"><rect x="4.2" y="6" width="14.5" height="11" rx="1.5" fill="#e2e2e8"/><rect x="4.2" y="3" width="14.5" height="3.5" rx="0.8" fill="#c8a850"/><rect x="5.5" y="6.2" width="3.5" height="3" fill="#4a3028"/><rect x="14" y="6.2" width="3.5" height="3" fill="#4a3028"/><rect x="10" y="3.5" width="2.5" height="5" fill="#3a2820"/><rect x="9.5" y="8.5" width="3.5" height="1.3" fill="#4a3a48"/><rect x="4.5" y="15.8" width="14" height="1.2" fill="#c8b890"/></g></svg><div class="t" style="left:378px;top:223px;color:#000;font-size:12px;">cioctar100</div><div class="a" style="left:660px;top:218px;width:22px;height:22px;background:#fff;box-shadow:1px 1px 1px -0.3px #999"></div><svg style="left:661px;top:219px" width="21" height="21" viewBox="0 0 21 21"><g transform="translate(-2 0)"><rect x="4.2" y="6" width="14.5" height="11" rx="1.5" fill="#e2e2e8"/><rect x="4.2" y="3" width="14.5" height="3.5" rx="0.8" fill="#c8a850"/><rect x="5.5" y="6.2" width="3.5" height="3" fill="#4a3028"/><rect x="14" y="6.2" width="3.5" height="3" fill="#4a3028"/><rect x="10" y="3.5" width="2.5" height="5" fill="#3a2820"/><rect x="9.5" y="8.5" width="3.5" height="1.3" fill="#4a3a48"/><rect x="4.5" y="15.8" width="14" height="1.2" fill="#c8b890"/></g></svg><div class="t" style="left:687px;top:223px;color:#000;font-size:12px;">cioctar<span style="letter-spacing:-0.3px">100</span>_Spalmabile-di-Nocciole-al-Tartufo-...</div><div class="a" style="left:351px;top:248px;width:22px;height:22px;background:#fff;box-shadow:1px 1px 1px -0.3px #999"></div><svg style="left:352px;top:249px" width="21" height="21" viewBox="0 0 21 21"><rect x="4.9" y="2" width="9.799999999999999" height="2.5" fill="#c9a860"/><rect x="4.6000000000000005" y="4.5" width="10.399999999999999" height="12.7" rx="1.2" fill="#e2cc98"/><rect x="4.9" y="8" width="9.799999999999999" height="5" fill="#f3f0f2"/><rect x="6.4" y="8.5" width="6.799999999999999" height="1.5" fill="#5a4050"/><circle cx="14.5" cy="3" r="2.3" fill="#f26a30"/></svg><div class="t" style="left:378px;top:253px;color:#000;font-size:12px;">crptb90</div><div class="a" style="left:660px;top:248px;width:22px;height:22px;background:#fff;box-shadow:1px 1px 1px -0.3px #999"></div><svg style="left:661px;top:249px" width="21" height="21" viewBox="0 0 21 21"><rect x="4.9" y="2" width="9.799999999999999" height="2.5" fill="#c9a860"/><rect x="4.6000000000000005" y="4.5" width="10.399999999999999" height="12.7" rx="1.2" fill="#e2cc98"/><rect x="4.9" y="8" width="9.799999999999999" height="5" fill="#f3f0f2"/><rect x="6.4" y="8.5" width="6.799999999999999" height="1.5" fill="#5a4050"/><circle cx="14.5" cy="3" r="2.3" fill="#f26a30"/></svg><div class="t" style="left:687px;top:253px;color:#000;font-size:12px;">crptb<span style="letter-spacing:-0.3px">90</span>_Delizia-di-Funghi-Porcini-<span style="letter-spacing:-0.3px">1</span>-<span style="letter-spacing:-0.3px">768</span>x<span style="letter-spacing:-0.3px">768</span></div><div class="a" style="left:351px;top:278px;width:22px;height:22px;background:#fff;box-shadow:1px 1px 1px -0.3px #999"></div><svg style="left:352px;top:279px" width="21" height="21" viewBox="0 0 21 21"><rect x="4.9" y="2" width="9.799999999999999" height="2.5" fill="#c9a860"/><rect x="4.6000000000000005" y="4.5" width="10.399999999999999" height="12.7" rx="1.2" fill="#e2cc98"/><rect x="4.9" y="8" width="9.799999999999999" height="5" fill="#f3f0f2"/><rect x="6.4" y="8.5" width="6.799999999999999" height="1.5" fill="#5a4050"/><circle cx="14.5" cy="3" r="2.3" fill="#f26a30"/></svg><div class="t" style="left:378px;top:283px;color:#000;font-size:12px;">crptb130</div><div class="a" style="left:660px;top:278px;width:22px;height:22px;background:#fff;box-shadow:1px 1px 1px -0.3px #999"></div><svg style="left:661px;top:279px" width="21" height="21" viewBox="0 0 21 21"><rect x="4.9" y="2" width="9.799999999999999" height="2.5" fill="#c9a860"/><rect x="4.6000000000000005" y="4.5" width="10.399999999999999" height="12.7" rx="1.2" fill="#e2cc98"/><rect x="4.9" y="8" width="9.799999999999999" height="5" fill="#f3f0f2"/><rect x="6.4" y="8.5" width="6.799999999999999" height="1.5" fill="#5a4050"/><circle cx="14.5" cy="3" r="2.3" fill="#f26a30"/></svg><div class="t" style="left:687px;top:283px;color:#000;font-size:12px;">crptb<span style="letter-spacing:-0.3px">130</span>_Delizia-di-Funghi-Porcini-<span style="letter-spacing:-0.3px">1</span>-<span style="letter-spacing:-0.3px">768</span>x<span style="letter-spacing:-0.3px">768</span></div><div class="a" style="left:351px;top:308px;width:22px;height:22px;background:#fff;box-shadow:1px 1px 1px -0.3px #999"></div><svg style="left:352px;top:309px" width="21" height="21" viewBox="0 0 21 21"><rect x="4.9" y="2" width="9.799999999999999" height="2.5" fill="#c9a860"/><rect x="4.6000000000000005" y="4.5" width="10.399999999999999" height="12.7" rx="1.2" fill="#e2cc98"/><rect x="4.9" y="8" width="9.799999999999999" height="5" fill="#f3f0f2"/><rect x="6.4" y="8.5" width="6.799999999999999" height="1.5" fill="#5a4050"/><circle cx="14.5" cy="3" r="2.3" fill="#f26a30"/></svg><div class="t" style="left:378px;top:313px;color:#000;font-size:12px;">crptb500</div><div class="a" style="left:660px;top:308px;width:22px;height:22px;background:#fff;box-shadow:1px 1px 1px -0.3px #999"></div><svg style="left:661px;top:309px" width="21" height="21" viewBox="0 0 21 21"><rect x="4.9" y="2" width="9.799999999999999" height="2.5" fill="#c9a860"/><rect x="4.6000000000000005" y="4.5" width="10.399999999999999" height="12.7" rx="1.2" fill="#e2cc98"/><rect x="4.9" y="8" width="9.799999999999999" height="5" fill="#f3f0f2"/><rect x="6.4" y="8.5" width="6.799999999999999" height="1.5" fill="#5a4050"/><circle cx="14.5" cy="3" r="2.3" fill="#f26a30"/></svg><div class="t" style="left:687px;top:313px;color:#000;font-size:12px;">crptb<span style="letter-spacing:-0.3px">500</span>_Delizia-di-Funghi-Porcini-<span style="letter-spacing:-0.3px">1</span>-<span style="letter-spacing:-0.3px">768</span>x<span style="letter-spacing:-0.3px">768</span></div><div class="a" style="left:351px;top:338px;width:22px;height:22px;background:#fff;box-shadow:1px 1px 1px -0.3px #999"></div><svg style="left:352px;top:339px" width="21" height="21" viewBox="0 0 21 21"><rect x="4.9" y="2" width="9.799999999999999" height="2.5" fill="#d8b060"/><rect x="4.6000000000000005" y="4.5" width="10.399999999999999" height="12.7" rx="1.2" fill="#f0a838"/><rect x="4.9" y="8" width="9.799999999999999" height="5" fill="#f4f0ee"/><rect x="6.4" y="8.5" width="6.799999999999999" height="1.5" fill="#5a4050"/></svg><div class="t" style="left:378px;top:343px;color:#000;font-size:12px;">curtb100</div><div class="a" style="left:660px;top:338px;width:22px;height:22px;background:#fff;box-shadow:1px 1px 1px -0.3px #999"></div><svg style="left:661px;top:339px" width="21" height="21" viewBox="0 0 21 21"><rect x="4.9" y="2" width="9.799999999999999" height="2.5" fill="#d8b060"/><rect x="4.6000000000000005" y="4.5" width="10.399999999999999" height="12.7" rx="1.2" fill="#f0a838"/><rect x="4.9" y="8" width="9.799999999999999" height="5" fill="#f4f0ee"/><rect x="6.4" y="8.5" width="6.799999999999999" height="1.5" fill="#5a4050"/></svg><div class="t" style="left:687px;top:343px;color:#000;font-size:12px;">curtb<span style="letter-spacing:-0.3px">100</span>_Curry-al-Tartufo-Bianco-<span style="letter-spacing:-0.3px">768</span>x<span style="letter-spacing:-0.3px">768</span></div><div class="a" style="left:351px;top:368px;width:22px;height:22px;background:#fff;box-shadow:1px 1px 1px -0.3px #999"></div><svg style="left:352px;top:369px" width="21" height="21" viewBox="0 0 21 21"><rect x="9.5" y="2" width="1.4" height="6" fill="#333"/><rect x="9" y="6" width="2.4" height="2" fill="#333"/><rect x="9.3" y="8" width="1.8" height="10" fill="#e8e8ec"/></svg><div class="t" style="left:378px;top:373px;color:#000;font-size:12px;">gocnetar100</div><div class="a" style="left:660px;top:368px;width:22px;height:22px;background:#fff;box-shadow:1px 1px 1px -0.3px #999"></div><svg style="left:661px;top:369px" width="21" height="21" viewBox="0 0 21 21"><rect x="9.5" y="2" width="1.4" height="6" fill="#333"/><rect x="9" y="6" width="2.4" height="2" fill="#333"/><rect x="9.3" y="8" width="1.8" height="10" fill="#e8e8ec"/></svg><div class="t" style="left:687px;top:373px;color:#000;font-size:12px;">gocnetar<span style="letter-spacing:-0.3px">100</span>_Goccia-<span style="letter-spacing:-0.3px">768</span>x<span style="letter-spacing:-0.3px">768</span></div><div class="a" style="left:351px;top:398px;width:22px;height:22px;background:#fff;box-shadow:1px 1px 1px -0.3px #999"></div><svg style="left:352px;top:399px" width="21" height="21" viewBox="0 0 21 21"><rect x="4.9" y="2" width="9.799999999999999" height="2.5" fill="#c8a060"/><rect x="4.6000000000000005" y="4.5" width="10.399999999999999" height="12.7" rx="1.2" fill="#d23a30"/><rect x="4.9" y="8" width="9.799999999999999" height="5" fill="#f2eaea"/><rect x="6.4" y="8.5" width="6.799999999999999" height="1.5" fill="#5a4050"/></svg><div class="t" style="left:378px;top:403px;color:#000;font-size:12px;">kupte100</div><div class="a" style="left:660px;top:398px;width:22px;height:22px;background:#fff;box-shadow:1px 1px 1px -0.3px #999"></div><svg style="left:661px;top:399px" width="21" height="21" viewBox="0 0 21 21"><rect x="4.9" y="2" width="9.799999999999999" height="2.5" fill="#c8a060"/><rect x="4.6000000000000005" y="4.5" width="10.399999999999999" height="12.7" rx="1.2" fill="#d23a30"/><rect x="4.9" y="8" width="9.799999999999999" height="5" fill="#f2eaea"/><rect x="6.4" y="8.5" width="6.799999999999999" height="1.5" fill="#5a4050"/></svg><div class="t" style="left:687px;top:403px;color:#000;font-size:12px;">kupte<span style="letter-spacing:-0.3px">100</span>_Ketchup-al-Tartufo-Estivo-<span style="letter-spacing:-0.3px">768</span>x<span style="letter-spacing:-0.3px">768</span></div><div class="a" style="left:351px;top:428px;width:22px;height:22px;background:#fff;box-shadow:1px 1px 1px -0.3px #999"></div><svg style="left:352px;top:429px" width="21" height="21" viewBox="0 0 21 21"><rect x="4.9" y="2" width="9.799999999999999" height="2.5" fill="#c8b078"/><rect x="4.6000000000000005" y="4.5" width="10.399999999999999" height="12.7" rx="1.2" fill="#efece6"/><rect x="4.9" y="8" width="9.799999999999999" height="5" fill="#f8f8f8"/><rect x="6.4" y="8.5" width="6.799999999999999" height="1.5" fill="#5a4050"/></svg><div class="t" style="left:378px;top:433px;color:#000;font-size:12px;">maitar100</div><div class="a" style="left:660px;top:428px;width:22px;height:22px;background:#fff;box-shadow:1px 1px 1px -0.3px #999"></div><svg style="left:661px;top:429px" width="21" height="21" viewBox="0 0 21 21"><rect x="4.9" y="2" width="9.799999999999999" height="2.5" fill="#c8b078"/><rect x="4.6000000000000005" y="4.5" width="10.399999999999999" height="12.7" rx="1.2" fill="#efece6"/><rect x="4.9" y="8" width="9.799999999999999" height="5" fill="#f8f8f8"/><rect x="6.4" y="8.5" width="6.799999999999999" height="1.5" fill="#5a4050"/></svg><div class="t" style="left:687px;top:433px;color:#000;font-size:12px;">maitar<span style="letter-spacing:-0.3px">100</span>_Maionese-Vegan-al-Tartufo-Nero-<span style="letter-spacing:-0.3px">7</span>...</div><div class="a" style="left:351px;top:458px;width:22px;height:22px;background:#fff;box-shadow:1px 1px 1px -0.3px #999"></div><svg style="left:352px;top:459px" width="21" height="21" viewBox="0 0 21 21"><rect x="4.9" y="2" width="9.799999999999999" height="2.5" fill="#c8b070"/><rect x="4.6000000000000005" y="4.5" width="10.399999999999999" height="12.7" rx="1.2" fill="#e8d898"/><rect x="4.9" y="8" width="9.799999999999999" height="5" fill="#f6f4f0"/><rect x="6.4" y="8.5" width="6.799999999999999" height="1.5" fill="#5a4050"/></svg><div class="t" style="left:378px;top:463px;color:#000;font-size:12px;">mostard100</div><div class="a" style="left:660px;top:458px;width:22px;height:22px;background:#fff;box-shadow:1px 1px 1px -0.3px #999"></div><svg style="left:661px;top:459px" width="21" height="21" viewBox="0 0 21 21"><rect x="4.9" y="2" width="9.799999999999999" height="2.5" fill="#c8b070"/><rect x="4.6000000000000005" y="4.5" width="10.399999999999999" height="12.7" rx="1.2" fill="#e8d898"/><rect x="4.9" y="8" width="9.799999999999999" height="5" fill="#f6f4f0"/><rect x="6.4" y="8.5" width="6.799999999999999" height="1.5" fill="#5a4050"/></svg><div class="t" style="left:687px;top:463px;color:#000;font-size:12px;">mostard<span style="letter-spacing:-0.3px">100</span>_Mostarda-al-Tartufo-Nero-<span style="letter-spacing:-0.3px">768</span>x<span style="letter-spacing:-0.3px">768</span></div><div class="a" style="left:351px;top:488px;width:22px;height:22px;background:#fff;box-shadow:1px 1px 1px -0.3px #999"></div><svg style="left:352px;top:489px" width="21" height="21" viewBox="0 0 21 21"><rect x="9.8" y="3" width="1.2" height="4" fill="#a89040"/><path d="M9.2 7H11.6L12 18H8.8Z" fill="#c8b040"/><rect x="9.3" y="11" width="2.2" height="5" fill="#8a7020"/></svg><div class="t" style="left:378px;top:493px;color:#000;font-size:12px;">oliob100s</div><div class="a" style="left:660px;top:488px;width:22px;height:22px;background:#fff;box-shadow:1px 1px 1px -0.3px #999"></div><svg style="left:661px;top:489px" width="21" height="21" viewBox="0 0 21 21"><rect x="9.8" y="3" width="1.2" height="4" fill="#a89040"/><path d="M9.2 7H11.6L12 18H8.8Z" fill="#c8b040"/><rect x="9.3" y="11" width="2.2" height="5" fill="#8a7020"/></svg><div class="t" style="left:687px;top:493px;color:#000;font-size:12px;">oliob<span style="letter-spacing:-0.3px">100</span>s_Oro-di-Tartufo-Bianco-<span style="letter-spacing:-0.3px">1</span></div><div class="a" style="left:351px;top:518px;width:22px;height:22px;background:#fff;box-shadow:1px 1px 1px -0.3px #999"></div><svg style="left:352px;top:519px" width="21" height="21" viewBox="0 0 21 21"><rect x="9.8" y="3" width="1.2" height="4" fill="#a89040"/><path d="M9.2 7H11.6L12 18H8.8Z" fill="#c8b040"/><rect x="9.3" y="11" width="2.2" height="5" fill="#8a7020"/></svg><div class="t" style="left:378px;top:523px;color:#000;font-size:12px;">oliob200s</div><div class="a" style="left:660px;top:518px;width:22px;height:22px;background:#fff;box-shadow:1px 1px 1px -0.3px #999"></div><svg style="left:661px;top:519px" width="21" height="21" viewBox="0 0 21 21"><rect x="9.8" y="3" width="1.2" height="4" fill="#a89040"/><path d="M9.2 7H11.6L12 18H8.8Z" fill="#c8b040"/><rect x="9.3" y="11" width="2.2" height="5" fill="#8a7020"/></svg><div class="t" style="left:687px;top:523px;color:#000;font-size:12px;">oliob<span style="letter-spacing:-0.3px">200</span>s_Oro-di-Tartufo-Bianco-<span style="letter-spacing:-0.3px">1</span></div><div class="a" style="left:351px;top:548px;width:22px;height:22px;background:#fff;box-shadow:1px 1px 1px -0.3px #999"></div><svg style="left:352px;top:549px" width="21" height="21" viewBox="0 0 21 21"><rect x="5" y="3" width="11" height="14" fill="#f0eeea"/><rect x="8" y="3" width="7" height="14" fill="#9a8060"/><rect x="9" y="5" width="5" height="10" fill="#c8b898"/><rect x="5" y="3" width="11" height="1.5" fill="#c0a070"/></svg><div class="t" style="left:378px;top:553px;color:#000;font-size:12px;">patetb85sc</div><div class="a" style="left:660px;top:548px;width:22px;height:22px;background:#fff;box-shadow:1px 1px 1px -0.3px #999"></div><svg style="left:661px;top:549px" width="21" height="21" viewBox="0 0 21 21"><rect x="5" y="3" width="11" height="14" fill="#f0eeea"/><rect x="8" y="3" width="7" height="14" fill="#9a8060"/><rect x="9" y="5" width="5" height="10" fill="#c8b898"/><rect x="5" y="3" width="11" height="1.5" fill="#c0a070"/></svg><div class="t" style="left:687px;top:553px;color:#000;font-size:12px;">patetb<span style="letter-spacing:-0.3px">85</span>sc_pate-al-tartufo-bianco-<span style="letter-spacing:-0.3px">768</span>x<span style="letter-spacing:-0.3px">768</span></div><div class="a" style="left:351px;top:578px;width:22px;height:22px;background:#fff;box-shadow:1px 1px 1px -0.3px #999"></div><svg style="left:352px;top:579px" width="21" height="21" viewBox="0 0 21 21"><path d="M5.5 3H15L14.5 17H6Z" fill="#8a7050"/><rect x="7" y="6" width="6" height="8" fill="#b8a078"/><rect x="8" y="5" width="4" height="1.5" fill="#f0f0f0"/><circle cx="14.5" cy="3.5" r="2.3" fill="#40b848"/></svg><div class="t" style="left:378px;top:583px;color:#000;font-size:12px;">patete85sc</div><div class="a" style="left:660px;top:578px;width:22px;height:22px;background:#fff;box-shadow:1px 1px 1px -0.3px #999"></div><svg style="left:661px;top:579px" width="21" height="21" viewBox="0 0 21 21"><path d="M5.5 3H15L14.5 17H6Z" fill="#8a7050"/><rect x="7" y="6" width="6" height="8" fill="#b8a078"/><rect x="8" y="5" width="4" height="1.5" fill="#f0f0f0"/><circle cx="14.5" cy="3.5" r="2.3" fill="#40b848"/></svg><div class="t" style="left:687px;top:583px;color:#000;font-size:12px;">patete<span style="letter-spacing:-0.3px">85</span>sc_Pate-al-tartufo-Estivo-<span style="letter-spacing:-0.3px">768</span>x<span style="letter-spacing:-0.3px">768</span></div><div class="a" style="left:351px;top:608px;width:22px;height:22px;background:#fff;box-shadow:1px 1px 1px -0.3px #999"></div><svg style="left:352px;top:609px" width="21" height="21" viewBox="0 0 21 21"><rect x="5" y="3" width="11" height="14" fill="#eeeeee"/><rect x="7.5" y="3.5" width="6.5" height="13" fill="#403a30"/><rect x="8.5" y="6" width="4.5" height="4" fill="#8a8070"/><rect x="5" y="3" width="11" height="1.5" fill="#c8a860"/></svg><div class="t" style="left:378px;top:613px;color:#000;font-size:12px;">patetn85sc</div><div class="a" style="left:660px;top:608px;width:22px;height:22px;background:#fff;box-shadow:1px 1px 1px -0.3px #999"></div><svg style="left:661px;top:609px" width="21" height="21" viewBox="0 0 21 21"><rect x="5" y="3" width="11" height="14" fill="#eeeeee"/><rect x="7.5" y="3.5" width="6.5" height="13" fill="#403a30"/><rect x="8.5" y="6" width="4.5" height="4" fill="#8a8070"/><rect x="5" y="3" width="11" height="1.5" fill="#c8a860"/></svg><div class="t" style="left:687px;top:613px;color:#000;font-size:12px;">patetn<span style="letter-spacing:-0.3px">85</span>sc_Pate-al-Tartufo-Nero-<span style="letter-spacing:-0.3px">768</span>x<span style="letter-spacing:-0.3px">768</span></div><div class="a" style="left:351px;top:638px;width:22px;height:22px;background:#fff;box-shadow:1px 1px 1px -0.3px #999"></div><svg style="left:352px;top:639px" width="21" height="21" viewBox="0 0 21 21"><rect x="6.5" y="3.5" width="8" height="13" fill="#f4f2f0"/><rect x="7.5" y="5" width="6" height="2" fill="#5a4a50"/><ellipse cx="10.5" cy="12" rx="3" ry="2.2" fill="#f0c870"/></svg><div class="t" style="left:378px;top:643px;color:#000;font-size:12px;">poltarsc300</div><div class="a" style="left:660px;top:638px;width:22px;height:22px;background:#fff;box-shadow:1px 1px 1px -0.3px #999"></div><svg style="left:661px;top:639px" width="21" height="21" viewBox="0 0 21 21"><rect x="6.5" y="3.5" width="8" height="13" fill="#f4f2f0"/><rect x="7.5" y="5" width="6" height="2" fill="#5a4a50"/><ellipse cx="10.5" cy="12" rx="3" ry="2.2" fill="#f0c870"/></svg><div class="t" style="left:687px;top:643px;color:#000;font-size:12px;">poltarsc<span style="letter-spacing:-0.3px">300</span>_Polenta-al-Tartufo-Bianco-scatola</div><div class="a" style="left:351px;top:668px;width:22px;height:22px;background:#fff;box-shadow:1px 1px 1px -0.3px #999"></div><svg style="left:352px;top:669px" width="21" height="21" viewBox="0 0 21 21"><rect x="6.5" y="3.5" width="8" height="13" fill="#f4f2f0"/><rect x="7.5" y="5" width="6" height="2" fill="#5a4a50"/><ellipse cx="10.5" cy="12" rx="3" ry="2.2" fill="#f0c870"/></svg><div class="t" style="left:378px;top:673px;color:#000;font-size:12px;">risotarsc350</div><div class="a" style="left:660px;top:668px;width:22px;height:22px;background:#fff;box-shadow:1px 1px 1px -0.3px #999"></div><svg style="left:661px;top:669px" width="21" height="21" viewBox="0 0 21 21"><rect x="6.5" y="3.5" width="8" height="13" fill="#f4f2f0"/><rect x="7.5" y="5" width="6" height="2" fill="#5a4a50"/><ellipse cx="10.5" cy="12" rx="3" ry="2.2" fill="#f0c870"/></svg><div class="t" style="left:687px;top:673px;color:#000;font-size:12px;">risotarsc<span style="letter-spacing:-0.3px">350</span>_Riso-Carnaroli-al-Tartufo-Nero-sc...</div><div class="a" style="left:351px;top:698px;width:22px;height:22px;background:#fff;box-shadow:1px 1px 1px -0.3px #999"></div><svg style="left:352px;top:699px" width="21" height="21" viewBox="0 0 21 21"><path d="M1.5 9.5C1.5 15 4.5 18.2 9 18.2C13.5 18.2 16.7 15 16.7 9.5Z" fill="#d9d2c4"/><ellipse cx="9.1" cy="8.6" rx="7.6" ry="7.4" fill="#cdb878"/><ellipse cx="9.1" cy="8.4" rx="6.2" ry="6" fill="#f6f3ee"/><rect x="7" y="3.6" width="4.2" height="1.6" fill="#6a5a66"/><path d="M5.5 9H12.5M6.5 11H11.5" stroke="#d8d0d0" stroke-width="0.8"/></svg><div class="t" style="left:378px;top:703px;color:#000;font-size:12px;">salfiocchitb30</div><div class="a" style="left:660px;top:698px;width:22px;height:22px;background:#fff;box-shadow:1px 1px 1px -0.3px #999"></div><svg style="left:661px;top:699px" width="21" height="21" viewBox="0 0 21 21"><path d="M1.5 9.5C1.5 15 4.5 18.2 9 18.2C13.5 18.2 16.7 15 16.7 9.5Z" fill="#d9d2c4"/><ellipse cx="9.1" cy="8.6" rx="7.6" ry="7.4" fill="#cdb878"/><ellipse cx="9.1" cy="8.4" rx="6.2" ry="6" fill="#f6f3ee"/><rect x="7" y="3.6" width="4.2" height="1.6" fill="#6a5a66"/><path d="M5.5 9H12.5M6.5 11H11.5" stroke="#d8d0d0" stroke-width="0.8"/></svg><div class="t" style="left:687px;top:703px;color:#000;font-size:12px;">salfiocchitb<span style="letter-spacing:-0.3px">30</span>_Fiocchi-di-Sale-al-Tartufo-Bian...</div><div class="a" style="left:351px;top:728px;width:22px;height:22px;background:#fff;box-shadow:1px 1px 1px -0.3px #999"></div><svg style="left:352px;top:729px" width="21" height="21" viewBox="0 0 21 21"><path d="M2 10C2 15 5 17.6 9.3 17.6C13.6 17.6 16.7 15 16.7 10Z" fill="#e2ddd6"/><ellipse cx="9.3" cy="9.2" rx="7.2" ry="6.2" fill="#cdb878"/><ellipse cx="9.3" cy="9" rx="5.8" ry="4.9" fill="#f6f3ee"/><rect x="8" y="4.8" width="2.8" height="1.5" fill="#6a5a66"/><path d="M6.5 10H12" stroke="#d8d0d0" stroke-width="0.8"/></svg><div class="t" style="left:378px;top:733px;color:#000;font-size:12px;">salft100</div><div class="a" style="left:660px;top:728px;width:22px;height:22px;background:#fff;box-shadow:1px 1px 1px -0.3px #999"></div><svg style="left:661px;top:729px" width="21" height="21" viewBox="0 0 21 21"><path d="M2 10C2 15 5 17.6 9.3 17.6C13.6 17.6 16.7 15 16.7 10Z" fill="#e2ddd6"/><ellipse cx="9.3" cy="9.2" rx="7.2" ry="6.2" fill="#cdb878"/><ellipse cx="9.3" cy="9" rx="5.8" ry="4.9" fill="#f6f3ee"/><rect x="8" y="4.8" width="2.8" height="1.5" fill="#6a5a66"/><path d="M6.5 10H12" stroke="#d8d0d0" stroke-width="0.8"/></svg><div class="t" style="left:687px;top:733px;color:#000;font-size:12px;">salft<span style="letter-spacing:-0.3px">100</span>_Sal-Fiore-al-Tartufo-Estivo-<span style="letter-spacing:-0.3px">768</span>x<span style="letter-spacing:-0.3px">768</span></div><div class="a" style="left:351px;top:758px;width:22px;height:22px;background:#fff;box-shadow:1px 1px 1px -0.3px #999"></div><svg style="left:352px;top:759px" width="21" height="21" viewBox="0 0 21 21"><path d="M2 10C2 15 5 17.6 9.3 17.6C13.6 17.6 16.7 15 16.7 10Z" fill="#e2ddd6"/><ellipse cx="9.3" cy="9.2" rx="7.2" ry="6.2" fill="#cdb878"/><ellipse cx="9.3" cy="9" rx="5.8" ry="4.9" fill="#f6f3ee"/><rect x="8" y="4.8" width="2.8" height="1.5" fill="#6a5a66"/><path d="M6.5 10H12" stroke="#d8d0d0" stroke-width="0.8"/></svg><div class="t" style="left:378px;top:763px;color:#000;font-size:12px;">salgt100</div><div class="a" style="left:660px;top:758px;width:22px;height:22px;background:#fff;box-shadow:1px 1px 1px -0.3px #999"></div><svg style="left:661px;top:759px" width="21" height="21" viewBox="0 0 21 21"><path d="M2 10C2 15 5 17.6 9.3 17.6C13.6 17.6 16.7 15 16.7 10Z" fill="#e2ddd6"/><ellipse cx="9.3" cy="9.2" rx="7.2" ry="6.2" fill="#cdb878"/><ellipse cx="9.3" cy="9" rx="5.8" ry="4.9" fill="#f6f3ee"/><rect x="8" y="4.8" width="2.8" height="1.5" fill="#6a5a66"/><path d="M6.5 10H12" stroke="#d8d0d0" stroke-width="0.8"/></svg><div class="t" style="left:687px;top:763px;color:#000;font-size:12px;">salgt<span style="letter-spacing:-0.3px">100</span>_Sal-Marino-Integrale-al-Tartufo-Estiv...</div><div class="a" style="left:351px;top:788px;width:22px;height:22px;background:#fff;box-shadow:1px 1px 1px -0.3px #999"></div><svg style="left:352px;top:789px" width="21" height="21" viewBox="0 0 21 21"><rect x="5.2" y="2" width="9.6" height="3" rx="0.8" fill="#3a3018"/><rect x="4.9" y="4.5" width="10" height="12.5" rx="1.2" fill="#2a2420"/><rect x="5.3" y="8.5" width="9.2" height="6" fill="#e6e8ee"/><rect x="7" y="9" width="6" height="1.3" fill="#5a4a60"/></svg><div class="t" style="left:378px;top:793px;color:#000;font-size:12px;">sftnat90</div><div class="a" style="left:660px;top:788px;width:22px;height:22px;background:#fff;box-shadow:1px 1px 1px -0.3px #999"></div><svg style="left:661px;top:789px" width="21" height="21" viewBox="0 0 21 21"><rect x="5.2" y="2" width="9.6" height="3" rx="0.8" fill="#3a3018"/><rect x="4.9" y="4.5" width="10" height="12.5" rx="1.2" fill="#2a2420"/><rect x="5.3" y="8.5" width="9.2" height="6" fill="#e6e8ee"/><rect x="7" y="9" width="6" height="1.3" fill="#5a4a60"/></svg><div class="t" style="left:687px;top:793px;color:#000;font-size:12px;">sftnat<span style="letter-spacing:-0.3px">90</span>_Salsa-Naturale-Funghi-e-Tartufo-<span style="letter-spacing:-0.3px">15</span>-<span style="letter-spacing:-0.3px">7</span>...</div><div class="a" style="left:833px;top:249px;width:300px;height:64px;background:#fff;border:1px solid #767676;box-shadow:2px 2px 2px rgba(0,0,0,0.3)"></div><div class="t" style="left:839px;top:251px;color:#575757;font-size:12px;">cioctar<span style="letter-spacing:-0.3px">100</span>_Spalmabile-di-Nocciole-al-Tartufo-<span style="letter-spacing:-0.3px">768</span>x<span style="letter-spacing:-0.3px">768</span></div><div class="t" style="left:839px;top:266px;color:#575757;font-size:12px;letter-spacing:-0.1px">Tipo de item: Arquivo JPG</div><div class="t" style="left:839px;top:280px;color:#575757;font-size:12px;letter-spacing:-0.15px">Dimensões: <span style="letter-spacing:-0.8px">768</span> x <span style="letter-spacing:-0.8px">768</span></div><div class="t" style="left:839px;top:295px;color:#575757;font-size:12px;letter-spacing:-0.15px">Tamanho: <span style="letter-spacing:-0.5px">59</span>,<span style="letter-spacing:-0.5px">2</span> KB</div><svg style="left:1070px;top:790px" width="215" height="44" viewBox="0 0 215 44"><defs><filter id="ds" x="-10%" y="-30%" width="130%" height="180%"><feDropShadow dx="2" dy="3" stdDeviation="1.8" flood-color="#000" flood-opacity="0.5"/></filter></defs><g filter="url(#ds)" font-family="Liberation Sans" font-weight="bold" fill="#fff" stroke="#fff" stroke-width="4.5" stroke-linejoin="round"><text x="9.5" y="34.5" font-size="32">GGAMES</text><text x="149" y="35" font-size="14.3" textLength="59">.COM.BR</text></g><g font-family="Liberation Sans" font-weight="bold" fill="#000" stroke="#000" stroke-width="0.6"><text x="9.5" y="34.5" font-size="32">GGAMES</text><text x="149" y="35" font-size="14.3" textLength="59" stroke-width="0.4">.COM.BR</text></g></svg><div class="a" style="left:0;top:0;width:1285px;height:1px;background:#4f4f4f"></div><div class="a" style="left:0;top:0;width:1px;height:835px;background:#4f4f4f"></div><div class="a" style="left:1284px;top:0;width:1px;height:835px;background:#4f4f4f"></div><div class="a" style="left:0;top:834px;width:1285px;height:1px;background:#4f4f4f"></div></body></html>
